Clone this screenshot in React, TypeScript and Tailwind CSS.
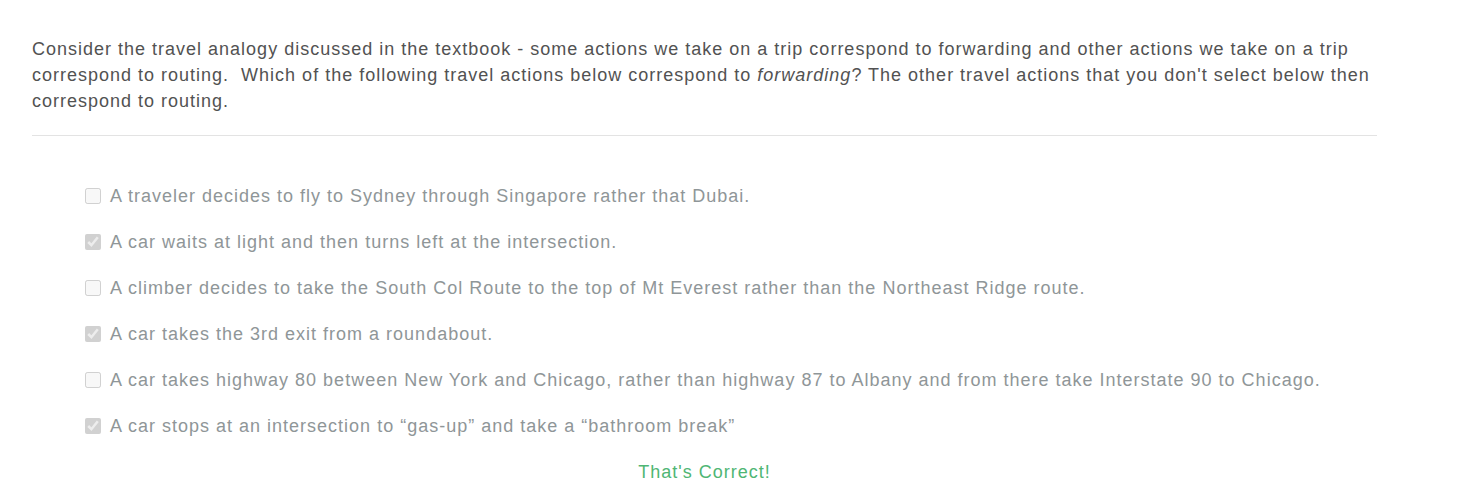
const options = [
  { id: "sydney", text: "A traveler decides to fly to Sydney through Singapore rather that Dubai.", checked: false },
  { id: "light", text: "A car waits at light and then turns left at the intersection.", checked: true },
  { id: "climber", text: "A climber decides to take the South Col Route to the top of Mt Everest rather than the Northeast Ridge route.", checked: false },
  { id: "roundabout", text: "A car takes the 3rd exit from a roundabout.", checked: true },
  { id: "highway", text: "A car takes highway 80 between New York and Chicago, rather than highway 87 to Albany and from there take Interstate 90 to Chicago.", checked: false },
  { id: "gas", text: "A car stops at an intersection to “gas-up” and take a “bathroom break”", checked: true },
];

export default function App() {
  return (
    <main className="bg-white pt-9 pr-[105px] pl-8 font-['Liberation_Sans',Arial,sans-serif] text-lg tracking-[1px] text-[#525252]">
      <p className="border-b border-[#e3e3e3] pb-[21px] leading-[26px]">
        Consider the travel analogy discussed in the textbook - some actions we take on a trip correspond to forwarding
        and other actions we take on a trip correspond to routing.&nbsp; Which of the following travel actions below
        correspond to <em>forwarding</em>? The other travel actions that you don't select below then correspond to routing.
      </p>
      <form className="pt-[47px]">
        <ul className="flex flex-col gap-5 pl-[53px] leading-[26px] text-[#8f9698]">
          {options.map((o) => (
            <li key={o.id} className="flex items-center gap-[9px]">
              <input id={o.id} type="checkbox" disabled defaultChecked={o.checked} className="size-4 shrink-0" />
              <label htmlFor={o.id}>{o.text}</label>
            </li>
          ))}
        </ul>
        <p className="mt-5 text-center leading-[26px] text-[#4fb674]">That's Correct!</p>
      </form>
    </main>
  );
}
